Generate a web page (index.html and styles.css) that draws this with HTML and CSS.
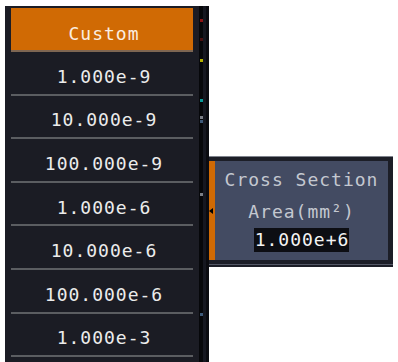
FILE: index.html
```html
<!DOCTYPE html>
<html lang="en">
<head>
    <meta charset="UTF-8">
    <title>Cross Section Area</title>
    <link rel="stylesheet" href="styles.css">
</head>
<body>
<div class="scope">
    <!-- 左侧单位列表 -->
    <div class="menu">
        <div class="menu-item active">Custom</div>
        <div class="menu-item">1.000e-9</div>
        <div class="menu-item">10.000e-9</div>
        <div class="menu-item">100.000e-9</div>
        <div class="menu-item">1.000e-6</div>
        <div class="menu-item">10.000e-6</div>
        <div class="menu-item">100.000e-6</div>
        <div class="menu-item">1.000e-3</div>
    </div>

    <!-- 通道标记条 -->
    <div class="rail">
        <span class="mark red" style="top: 13px"></span>
        <span class="mark dark-red" style="top: 32px"></span>
        <span class="mark yellow" style="top: 53px"></span>
        <span class="mark cyan" style="top: 93px"></span>
        <span class="mark gray" style="top: 110px"></span>
        <span class="mark slate" style="top: 114px"></span>
        <span class="mark gray" style="top: 187px"></span>
        <span class="mark slate" style="top: 307px"></span>
    </div>

    <!-- 右侧参数弹窗 -->
    <div class="popup">
        <span class="pointer"></span>
        <div class="popup-body">
            <div class="popup-label">Cross Section</div>
            <div class="popup-label">Area(mm²)</div>
            <div class="popup-value">1.000e+6</div>
        </div>
        <div class="popup-edge"></div>
    </div>
</div>
</body>
</html>
```

FILE: styles.css
```css
body {
    margin: 0;
    background: #ffffff;
    font-family: "DejaVu Sans Mono", "Liberation Mono", monospace;
    overflow: hidden;
}

.scope {
    display: flex;
    align-items: flex-start;
    padding: 6px 0 0 5px;
}

/* 单位列表 */
.menu {
    width: 194px;
    height: 356px;
    box-sizing: border-box;
    padding: 2px 6px 0;
    background: #1b1c24;
    overflow: hidden;
}

.menu-item {
    height: 43.6px;
    box-sizing: border-box;
    padding: 7px 0 0 4px;
    border-bottom: 2px solid #5b5d61;
    display: flex;
    align-items: center;
    justify-content: center;
    color: #ececec;
    font-size: 18px;
    letter-spacing: 1px;
}

.menu-item.active {
    height: 44px;
    padding-top: 8px;
    background: #d06a04;
    border-bottom-color: #7e6652;
    color: #fbeee0;
}

/* 标记条 */
.rail {
    position: relative;
    width: 10px;
    height: 356px;
    background: linear-gradient(to right, #06070a 0, #06070a 4px, #151720 4px, #151720 7px, #0a0b10 7px);
}

.mark {
    position: absolute;
    left: 1px;
    width: 3px;
    height: 3px;
}

.mark.red { background: #8c1414; }
.mark.dark-red { background: #4a1010; }
.mark.yellow { background: #b4b000; }
.mark.cyan { background: #0a9a9a; }
.mark.gray { background: #7a7e86; }
.mark.slate { background: #3e5a7a; }

/* 参数弹窗 */
.popup {
    position: relative;
    width: 184px;
    margin-top: 150px;
    box-sizing: border-box;
    padding: 4px 5px 0 0;
    background: #1c1e27;
    border-top: 1px solid #7f838d;
}

.popup-body {
    height: 99px;
    box-sizing: border-box;
    padding-top: 3px;
    border-left: 6px solid #d06a04;
    background: #434b62;
    display: flex;
    flex-direction: column;
    align-items: center;
}

.popup-label {
    line-height: 32px;
    color: #c4c8d0;
    font-size: 18px;
    letter-spacing: 1px;
}

.popup-value {
    height: 24px;
    line-height: 24px;
    padding: 0 0 0 1px;
    background: #0d0e13;
    color: #f4f4f4;
    font-size: 18px;
    letter-spacing: 1px;
}

.popup-edge {
    height: 1px;
    margin: 4px -5px 2px 0;
    background: #545866;
}

.pointer {
    position: absolute;
    left: 0;
    top: 51px;
    width: 0;
    height: 0;
    border-top: 3px solid transparent;
    border-bottom: 3px solid transparent;
    border-right: 4px solid #000000;
}
```
